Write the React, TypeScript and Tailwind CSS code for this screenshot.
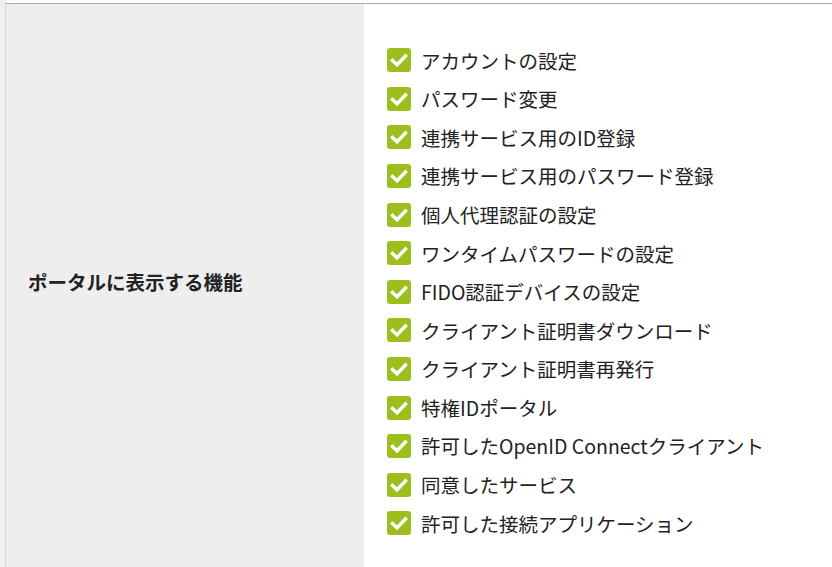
const features = [
  "アカウントの設定",
  "パスワード変更",
  "連携サービス用のID登録",
  "連携サービス用のパスワード登録",
  "個人代理認証の設定",
  "ワンタイムパスワードの設定",
  "FIDO認証デバイスの設定",
  "クライアント証明書ダウンロード",
  "クライアント証明書再発行",
  "特権IDポータル",
  "許可したOpenID Connectクライアント",
  "同意したサービス",
  "許可した接続アプリケーション",
];

function CheckBox() {
  return (
    <span className="flex h-6 w-6 shrink-0 items-center justify-center rounded-[3px] bg-[#9dbf1e]">
      <svg viewBox="0 0 24 24" className="h-6 w-6">
        <path
          d="M5.5 12.5l4.5 4.3L18.5 8"
          fill="none"
          stroke="#ffffff"
          strokeWidth="3.4"
          strokeLinecap="square"
        />
      </svg>
    </span>
  );
}

export default function App() {
  return (
    <div
      className="flex h-[567px] w-full overflow-hidden bg-[#eeeeee] text-[#222222]"
      style={{ fontFamily: '"Noto Sans CJK JP", "Noto Sans", sans-serif' }}
    >
      {/* page gutter */}
      <div className="w-[5px] shrink-0 bg-[#f0f0f0]" />
      <div className="flex flex-1 flex-col border-l border-[#c9dcea]">
        <div className="h-[3px] bg-white" />
        <div className="flex flex-1 border-t border-[#a3adb6]">
          {/* label cell */}
          <div className="flex w-[358px] shrink-0 items-center bg-[#eeeeee] pb-[8px] pl-[22px]">
            <span className="text-[19.5px] font-bold">ポータルに表示する機能</span>
          </div>
          {/* value cell */}
          <div className="flex-1 bg-white pl-[23px] pt-[37px]">
            <ul className="flex flex-col">
              {features.map((f) => (
                <li key={f} className="flex h-[38.6px] items-center gap-[10px]">
                  <CheckBox />
                  <span className="whitespace-nowrap text-[19.5px] leading-none">{f}</span>
                </li>
              ))}
            </ul>
          </div>
        </div>
      </div>
    </div>
  );
}
